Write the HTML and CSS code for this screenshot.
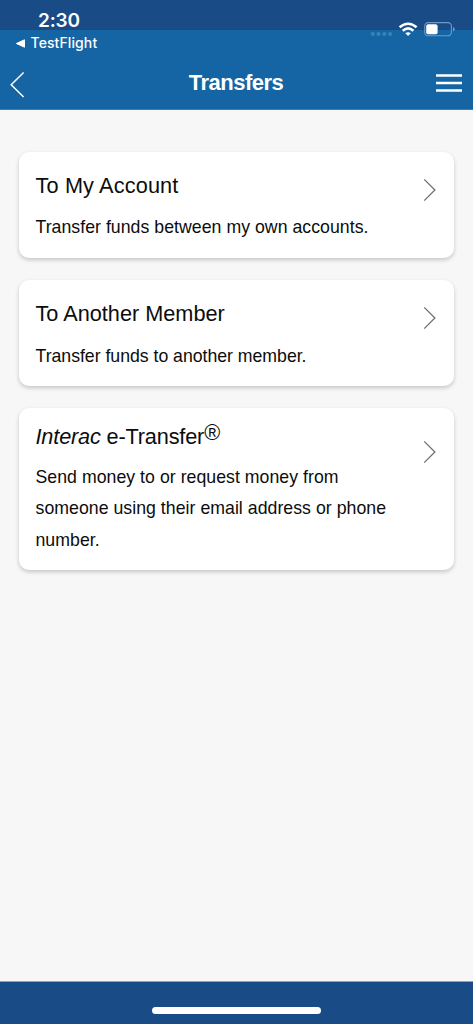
FILE: index.html
```html
<!DOCTYPE html>
<html lang="en">
<head>
<meta charset="utf-8">
<meta name="viewport" content="width=device-width">
<title>Transfers</title>
<link rel="stylesheet" href="styles.css">
</head>
<body>
<div class="screen">
  <header class="header">
    <div class="status">
      <div class="status-left">
        <div class="time">2:30</div>
        <div class="return-app">
          <svg class="return-icon" width="10" height="9" viewBox="0 0 10 9"><path d="M1.4 4.5 9.5.8V8.2Z" fill="#fff" stroke="#fff" stroke-width="1" stroke-linejoin="round"/></svg>
          <span>TestFlight</span>
        </div>
      </div>
      <svg class="status-icons" width="88" height="18" viewBox="0 0 88 18">
        <g fill="#3583b8"><circle cx="2.8" cy="13" r="2.1"/><circle cx="8.5" cy="13" r="2.1"/><circle cx="14.4" cy="13" r="2.1"/><circle cx="20.1" cy="13" r="2.1"/></g>
        <g fill="none" stroke="#fff" stroke-width="2.6"><path d="M29.6 6.3Q38.1-.8 46.6 6.3"/><path d="M32.8 9.7Q38.1 5.2 43.4 9.7"/></g>
        <path d="M35.4 12.3Q38.1 10 40.8 12.3L38.1 15.1Z" fill="#fff"/>
        <rect x="54.7" y="1.6" width="26.7" height="13.2" rx="3.6" fill="none" stroke="#6d9bc3" stroke-width="1.1"/>
        <rect x="56.2" y="3.2" width="11.4" height="10" rx="2" fill="#fff"/>
        <path d="M83 6.1q1.7.6 1.7 2.2T83 10.5Z" fill="#6d9bc3"/>
      </svg>
    </div>
    <nav class="nav">
      <svg class="back" width="16" height="28" viewBox="0 0 16 28"><path d="M13.6 1.5 1.2 13.7 13.6 26" fill="none" stroke="#fff" stroke-width="1.5"/></svg>
      <h1 class="page-title">Transfers</h1>
      <svg class="menu" width="26" height="20" viewBox="0 0 26 20"><path d="M0 2.4H26M0 9.9H26M0 17.4H26" stroke="#fff" stroke-width="2.5"/></svg>
    </nav>
  </header>
  <main class="content">
    <section class="card">
      <div class="card-text">
        <h2 class="card-title title-account">To My Account</h2>
        <p class="card-desc">Transfer funds between my own accounts.</p>
      </div>
      <svg class="chevron" width="14" height="24" viewBox="0 0 14 24"><path d="M1.2 1.4 11.9 12 1.2 22.6" fill="none" stroke="#707070" stroke-width="1.3"/></svg>
    </section>
    <section class="card">
      <div class="card-text">
        <h2 class="card-title">To Another Member</h2>
        <p class="card-desc desc-member">Transfer funds to another member.</p>
      </div>
      <svg class="chevron" width="14" height="24" viewBox="0 0 14 24"><path d="M1.2 1.4 11.9 12 1.2 22.6" fill="none" stroke="#707070" stroke-width="1.3"/></svg>
    </section>
    <section class="card card-interac">
      <div class="card-text">
        <h2 class="card-title title-interac"><em>Interac</em> e-Transfer<span class="registered">®</span></h2>
        <p class="card-desc">Send money to or request money from<br>someone using their email address or phone<br>number.</p>
      </div>
      <svg class="chevron" width="14" height="24" viewBox="0 0 14 24"><path d="M1.2 1.4 11.9 12 1.2 22.6" fill="none" stroke="#707070" stroke-width="1.3"/></svg>
    </section>
  </main>
  <footer class="footer"><div class="home-indicator"></div></footer>
</div>
</body>
</html>
```
FILE: styles.css
```css
* { box-sizing: border-box; }
body { margin: 0; }
h1, h2, p { margin: 0; font-weight: 400; }
svg { display: block; flex: none; }

.screen {
  height: 1024px;
  display: flex;
  flex-direction: column;
  background: #f7f7f7;
  font-family: "Liberation Sans", Arial, sans-serif;
  color: #0c0c0c;
  overflow: hidden;
}

.header {
  height: 110px;
  background: linear-gradient(#194c87 0 30px, #1565a5 30px);
  border-bottom: 1px solid #3b7fb5;
  color: #fff;
}

.status {
  height: 56px;
  display: flex;
  justify-content: space-between;
  padding: 9px 15px 0 15px;
  font-family: Inter, sans-serif;
}

.time {
  padding-left: 23px;
  font-size: 19px;
  line-height: 23px;
  font-weight: 600;
  letter-spacing: -.2px;
}

.return-app {
  display: flex;
  align-items: center;
  gap: 5.5px;
  margin-top: 2px;
  font-size: 14px;
  line-height: 18px;
  font-weight: 500;
  letter-spacing: .1px;
}

.status-icons { margin-top: 12px; }

.nav {
  height: 53px;
  display: flex;
  align-items: center;
  justify-content: space-between;
  padding: 0 11px 0 10px;
}

.back { margin-top: 5px; }
.page-title {
  font-size: 22px;
  line-height: 26px;
  font-weight: 700;
  letter-spacing: -.5px;
  margin-left: 10px;
}

.content {
  flex: 1;
  display: flex;
  flex-direction: column;
  gap: 22.4px;
  padding: 41.6px 19px 0;
}

.card {
  height: 106px;
  display: flex;
  justify-content: space-between;
  padding: 19.4px 17px 0 16.5px;
  border-radius: 10px;
  background: #fff;
  box-shadow: 0 2px 4px rgba(0, 0, 0, .2);
}

.card-title {
  font-size: 21.7px;
  line-height: 29px;
  white-space: nowrap;
}

.title-account { letter-spacing: .15px; }
.title-interac { letter-spacing: -.16px; }

.card-desc {
  margin-top: 12.4px;
  font-size: 17.7px;
  line-height: 31.5px;
  letter-spacing: .035px;
  white-space: nowrap;
}

.desc-member { letter-spacing: -.02px; }

.chevron { margin-top: 7px; }

.card-interac {
  height: 162px;
  padding-top: 14px;
}

.card-interac .chevron { margin-top: 17.5px; }
.card-interac .card-desc { margin-top: 10.5px; }

.registered {
  display: inline-block;
  line-height: 1;
  transform: translateY(-4px);
}

.footer {
  height: 43px;
  display: flex;
  justify-content: center;
  align-items: flex-start;
  padding-top: 25px;
  border-top: 1px solid #8ba5bd;
  background: #194c87;
}

.home-indicator {
  width: 169px;
  height: 7px;
  border-radius: 4px;
  background: #fff;
}
```
